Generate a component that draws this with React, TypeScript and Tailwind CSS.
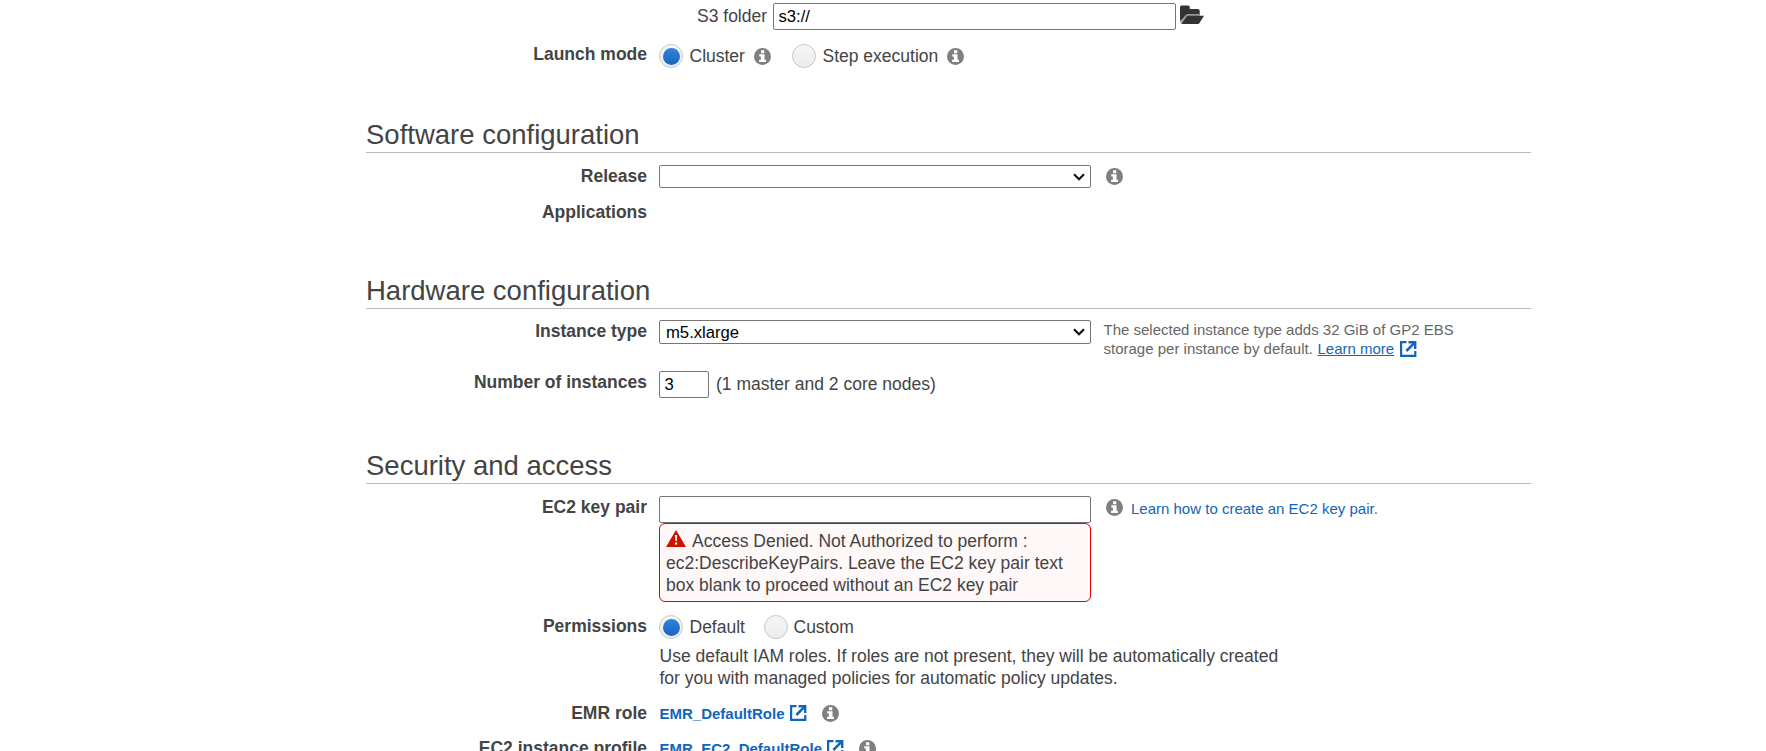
import React from "react";

function InfoIcon({ className = "" }: { className?: string }) {
  return (
    <svg viewBox="0 0 17 17" className={`h-[17px] w-[17px] shrink-0 ${className}`} aria-hidden="true">
      <circle cx="8.5" cy="8.5" r="8.5" fill="#808080" />
      <path d="M7 2.3h3.3v2.9H7zM5.3 6.3h5.2v5.5H12V14H5.1v-2.200h1.800V8.400H5.300z" fill="#fff" />
    </svg>
  );
}

function ExternalIcon({ className = "" }: { className?: string }) {
  return (
    <svg viewBox="0 0 17 16" className={`h-4 w-[17px] shrink-0 ${className}`} aria-hidden="true">
      <g fill="none" stroke="#1166bb">
        <path d="M6.500 1.100H1.100v13.800h14.200V10" strokeWidth="2.200" />
        <path d="M8.500 1.200h6.700v6.700" strokeWidth="2.400" />
        <path d="M15 1.400L6.300 10" strokeWidth="2.500" />
      </g>
    </svg>
  );
}

function FolderIcon() {
  return (
    <svg viewBox="0 0 24 19" className="mt-[5px] ml-1 h-[19px] w-6 shrink-0" aria-hidden="true">
      <path d="M0 16V2.500C0 1 .8.500 2 .500h5.500C9 .500 9.800 1 9.800 2.500V4h7.700C19 4 19.700 4.800 19.700 6v4H8z" fill="#333" />
      <path d="M0 17l5-6.300C6 9.600 6.800 9 8 9h11.700v2H8L1.500 18.500z" fill="#999" />
      <path d="M1.300 19l5.200-7.200c.5-.7 1-1 1.900-1H24l-4.200 6.700c-.7 1.100-1.300 1.500-2.500 1.500z" fill="#333" />
    </svg>
  );
}

function WarningIcon() {
  return (
    <svg viewBox="0 0 20 17" className="mr-[6px] h-[17px] w-5 shrink-0" aria-hidden="true">
      <path d="M10 0l10 17H0z" fill="#cc1100" />
      <path d="M9 5h2.200l-.4 6H9.400zM9 12.500h2.200v2H9z" fill="#fff" />
    </svg>
  );
}

function Radio({ checked = false }: { checked?: boolean }) {
  return (
    <span className="flex h-6 w-6 shrink-0 items-center justify-center rounded-full border border-[#c8c8c8] bg-linear-to-b from-[#f6f6f6] to-[#ececec]">
      {checked && <span className="h-[17px] w-[17px] rounded-full bg-linear-to-b from-[#2f83dc] to-[#1467bd]" />}
    </span>
  );
}

function Heading({ children }: { children: React.ReactNode }) {
  return (
    <h2 className="h-[38px] border-b border-[#bbbbbb] text-[27.5px] leading-[40px] font-normal whitespace-nowrap">
      {children}
    </h2>
  );
}

function Row({ label, className, children }: { label: string; className: string; children?: React.ReactNode }) {
  return (
    <div className={`flex items-start ${className}`}>
      <div className="mr-3 w-[281px] shrink-0 text-right font-bold whitespace-nowrap">{label}</div>
      {children}
    </div>
  );
}

function Select({ value, className }: { value: string; className: string }) {
  return (
    <div className={`relative w-[432px] shrink-0 ${className}`}>
      <select
        defaultValue={value}
        className="block h-full w-full appearance-none rounded-[2px] border border-[#767676] bg-white pl-[6px] text-[16.67px] leading-[21px] text-black"
      >
        <option value={value}>{value}</option>
      </select>
      <svg viewBox="0 0 12 8" className="pointer-events-none absolute top-2 right-[6px] h-2 w-3" aria-hidden="true">
        <path d="M1 1.200l5 5 5-5" fill="none" stroke="#111" strokeWidth="2.200" />
      </svg>
    </div>
  );
}

const inputClass = "block h-[27px] shrink-0 rounded-[2px] border border-[#767676] bg-white px-[4.5px] text-[16.67px] text-black";

export default function App() {
  return (
    <main className="h-[751px] overflow-hidden bg-white font-['Liberation_Sans',Arial,sans-serif] text-[17.5px] leading-[22px] text-[#444444]">
      <div className="ml-[366px] w-[1165px]">
        <div className="flex h-[43px] items-start pl-[331px]">
          <label className="mt-[5px] w-[76px] whitespace-nowrap">S3 folder</label>
          <input defaultValue="s3://" className={`${inputClass} mt-[3px] w-[403px]`} />
          <FolderIcon />
        </div>
        <Row label="Launch mode" className="h-[72px]">
          <div className="flex h-6 items-center whitespace-nowrap mt-px">
            <Radio checked />
            <span className="ml-[6.5px] w-[64.5px]">Cluster</span>
            <InfoIcon />
            <span className="w-[21px]" />
            <Radio />
            <span className="ml-[6.5px] w-[124.5px]">Step execution</span>
            <InfoIcon />
          </div>
        </Row>

        <Heading>Software configuration</Heading>
        <Row label="Release" className="h-9 pt-3">
          <Select value="" className="h-[23px]" />
          <InfoIcon className="mt-[2.5px] ml-[15px]" />
        </Row>
        <Row label="Applications" className="h-[82px] pt-3" />

        <Heading>Hardware configuration</Heading>
        <Row label="Instance type" className="h-[51px] pt-[11px]">
          <Select value="m5.xlarge" className="h-6" />
          <div className="ml-[12.5px] text-[15px] leading-[19px] whitespace-nowrap text-[#666666]">
            <div>The selected instance type adds 32 GiB of GP2 EBS</div>
            <div className="flex">
              <span>storage per instance by default.&nbsp;</span>
              <a className="ml-[0.5px] text-[#1166bb] underline">Learn more</a>
              <ExternalIcon className="mt-[1.5px] ml-[6px]" />
            </div>
          </div>
        </Row>
        <Row label="Number of instances" className="h-[86px] pt-[11px]">
          <input defaultValue="3" className={`${inputClass} w-[50px]`} />
          <span className="mt-[2px] ml-[7px] whitespace-nowrap">(1 master and 2 core nodes)</span>
        </Row>

        <Heading>Security and access</Heading>
        <Row label="EC2 key pair" className="h-[131px] pt-3">
          <div className="w-[432px] shrink-0">
            <input defaultValue="" className={`${inputClass} w-full`} />
            <div className="h-[79px] rounded-[6px] border border-[#e00000] bg-[#fff8f8] pt-[6px] pl-[6px] whitespace-nowrap">
              <div className="flex h-[22px] items-start">
                <WarningIcon />
                <span>Access Denied. Not Authorized to perform :</span>
              </div>
              <div>ec2:DescribeKeyPairs. Leave the EC2 key pair text</div>
              <div>box blank to proceed without an EC2 key pair</div>
            </div>
          </div>
          <InfoIcon className="mt-[2.5px] ml-[15px]" />
          <a className="mt-[2px] ml-2 text-[15px] leading-[22px] whitespace-nowrap text-[#1166bb]">
            Learn how to create an EC2 key pair.
          </a>
        </Row>
        <Row label="Permissions" className="h-[87px]">
          <div>
            <div className="flex h-6 items-center whitespace-nowrap">
              <Radio checked />
              <span className="ml-[6.5px] w-[74.5px]">Default</span>
              <Radio />
              <span className="ml-[5.5px]">Custom</span>
            </div>
            <p className="mt-[6px] pl-[0.5px] whitespace-nowrap">
              Use default IAM roles. If roles are not present, they will be automatically created
              <br />
              for you with managed policies for automatic policy updates.
            </p>
          </div>
        </Row>
        <Row label="EMR role" className="h-[35px]">
          <div className="flex h-[22px] items-start pl-[0.5px]">
            <a className="text-[15px] leading-[24px] font-bold whitespace-nowrap text-[#1166bb]">EMR_DefaultRole</a>
            <ExternalIcon className="mt-[3px] ml-[5px]" />
            <InfoIcon className="mt-[2.5px] ml-[15px]" />
          </div>
        </Row>
        <Row label="EC2 instance profile" className="h-[22px]">
          <div className="flex h-[22px] items-start pl-[0.5px]">
            <a className="text-[15px] leading-[24px] font-bold whitespace-nowrap text-[#1166bb]">EMR_EC2_DefaultRole</a>
            <ExternalIcon className="mt-[3px] ml-[5px]" />
            <InfoIcon className="mt-[2.5px] ml-[15px]" />
          </div>
        </Row>
      </div>
    </main>
  );
}
